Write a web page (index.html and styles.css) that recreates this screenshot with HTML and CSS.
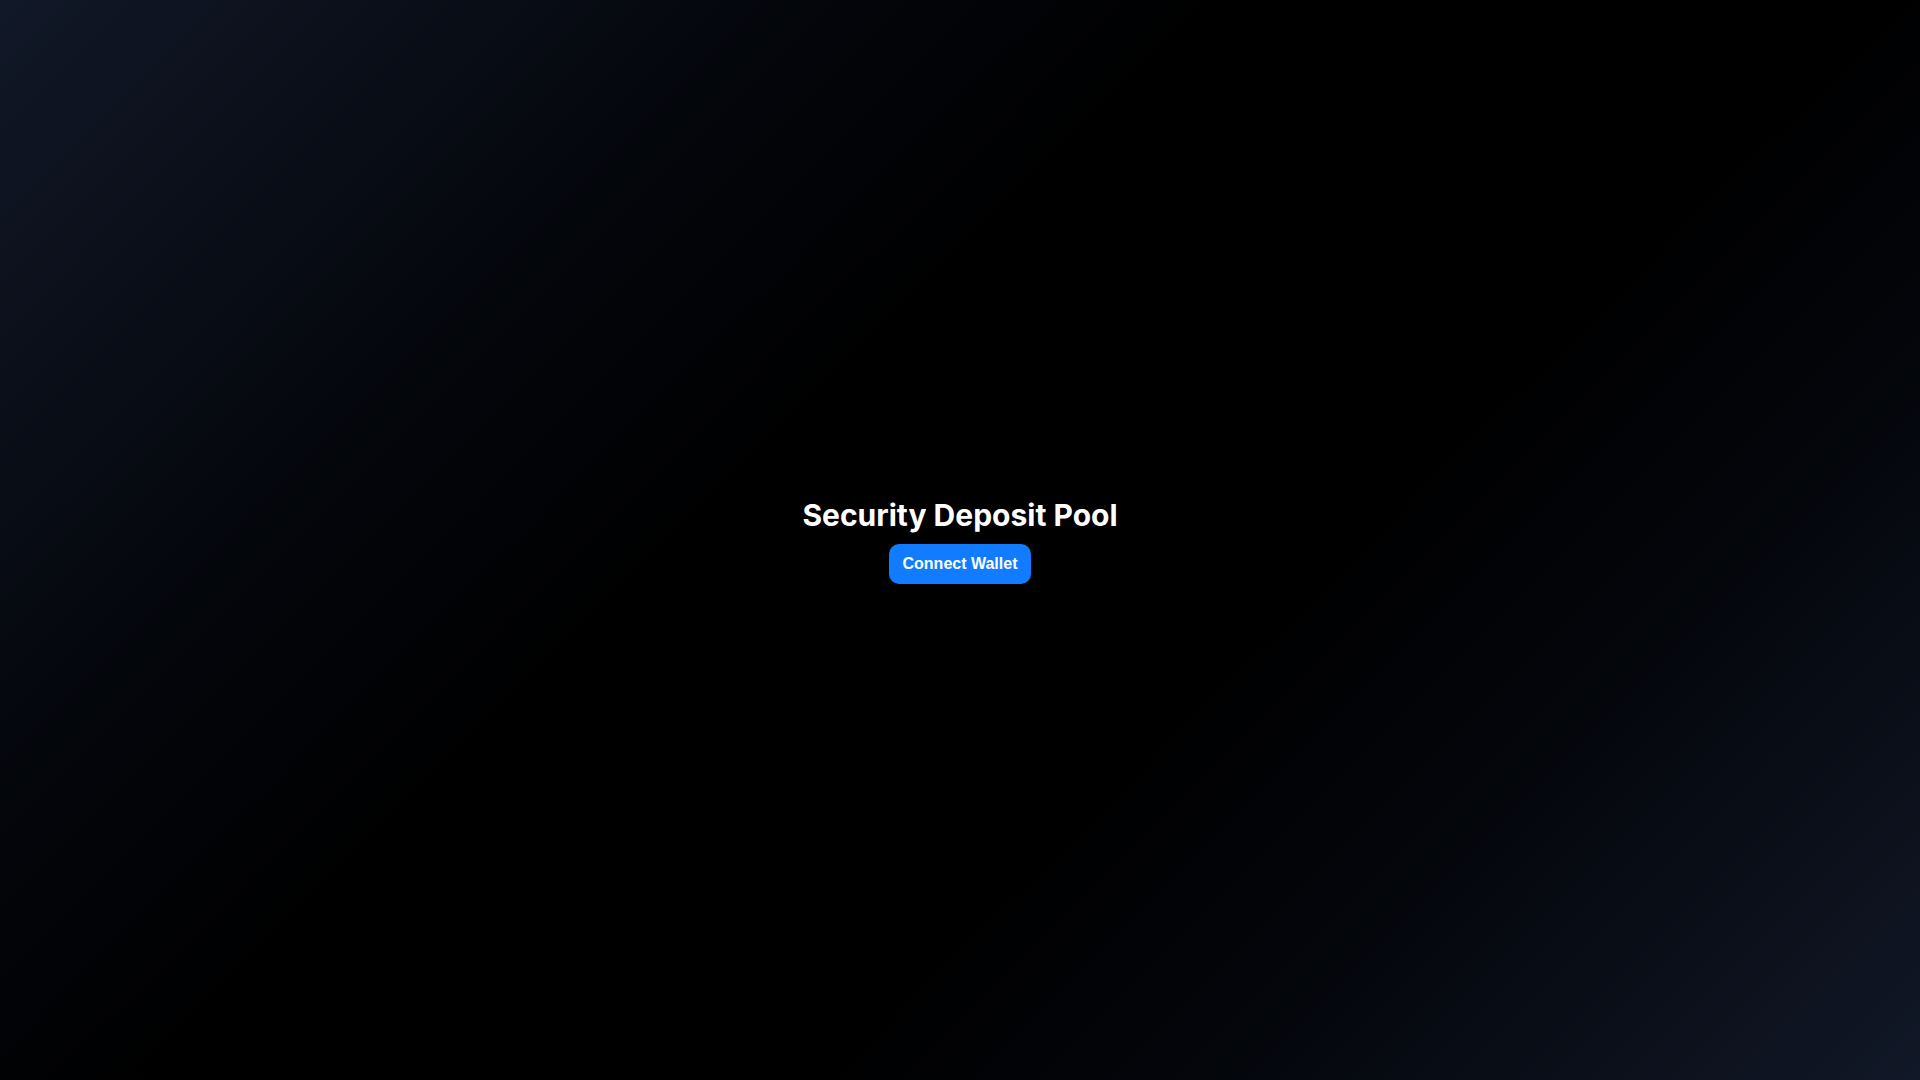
FILE: index.html
```html
<!DOCTYPE html>
<html lang="en">
<head>
<meta charset="utf-8">
<title>Security Deposit Pool</title>
<link rel="stylesheet" href="styles.css">
</head>
<body>
<main class="page">
  <div class="hero">
    <h1 class="title">Security Deposit Pool</h1>
    <button class="connect-btn" type="button">Connect Wallet</button>
  </div>
</main>
</body>
</html>
```
FILE: styles.css
```css
html, body {
  margin: 0;
  padding: 0;
  height: 100%;
}
body {
  background: linear-gradient(135deg, #111827 0%, #03050a 28%, #000 42%, #000 62%, #03050a 75%, #111827 100%);
  color: #fff;
  font-family: Inter, "Noto Sans", sans-serif;
}
.page {
  min-height: 100vh;
  display: flex;
  align-items: center;
  justify-content: center;
}
.hero {
  display: flex;
  flex-direction: column;
  align-items: center;
  gap: 11px;
}
.title {
  margin: 0;
  font-size: 30px;
  font-weight: 700;
  line-height: 36px;
}
.connect-btn {
  font-family: "Liberation Sans", Arial, sans-serif;
  font-weight: 700;
  font-size: 16px;
  line-height: 18px;
  color: #fff;
  background: #117cff;
  border: none;
  border-radius: 10px;
  padding: 11px 14px;
  cursor: pointer;
}
```
